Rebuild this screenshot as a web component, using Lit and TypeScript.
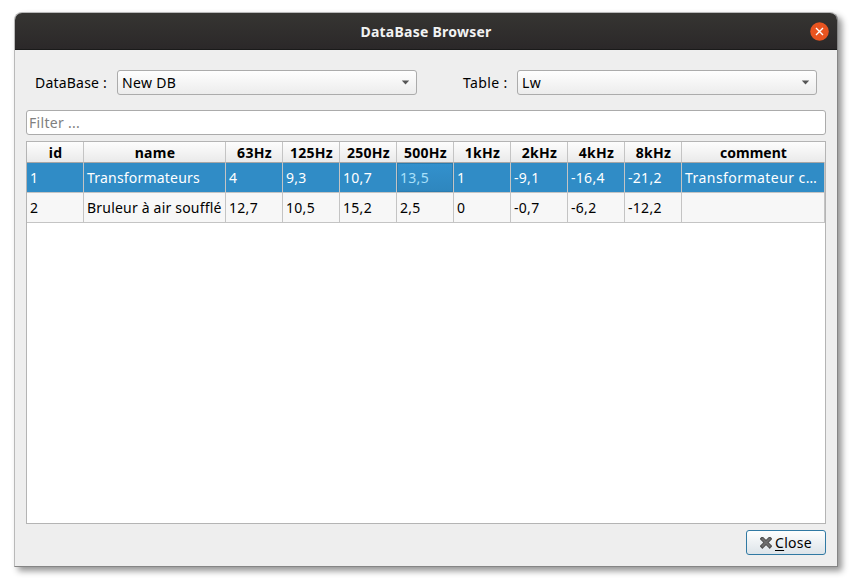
import { LitElement, html, css } from "lit";
import { customElement, property } from "lit/decorators.js";
import { classMap } from "lit/directives/class-map.js";

const COLUMNS = ["id", "name", "63Hz", "125Hz", "250Hz", "500Hz", "1kHz", "2kHz", "4kHz", "8kHz", "comment"];

const ROWS = [
  ["1", "Transformateurs", "4", "9,3", "10,7", "13,5", "1", "-9,1", "-16,4", "-21,2", "Transformateur c…"],
  ["2", "Bruleur à air soufflé", "12,7", "10,5", "15,2", "2,5", "0", "-0,7", "-6,2", "-12,2", ""],
];

const FOCUSED = { row: 0, column: 5 };

@customElement("combo-box")
export class ComboBox extends LitElement {
  @property() value = "";

  static styles = css`
    :host {
      display: flex;
      box-sizing: border-box;
      width: 300px;
      height: 25px;
      border: 1px solid #ababab;
      border-radius: 3px;
      background: linear-gradient(#fefefe, #ececec);
      align-items: center;
      justify-content: space-between;
      padding: 0 6px 0 4px;
    }
    span {
      letter-spacing: 0.35px;
    }
  `;

  render() {
    return html`<span>${this.value}</span>
      <svg width="9" height="5" viewBox="0 0 9 5"><path d="M0.8 0.5H8.2L4.5 4.6Z" fill="#555" /></svg>`;
  }
}

@customElement("data-table")
export class DataTable extends LitElement {
  static styles = css`
    :host {
      display: block;
      box-sizing: border-box;
      border: 1px solid #b4b4b4;
      background: #fff;
    }
    .line {
      display: grid;
      grid-template-columns: 57px 142px repeat(8, 57px) 1fr;
      grid-template-rows: 100%;
      height: 30px;
      line-height: 29px;
      background: #f7f7f7;
    }
    .line > div {
      box-sizing: border-box;
      border-right: 1px solid #c4c4c4;
      border-bottom: 1px solid #c4c4c4;
      padding-left: 3px;
      white-space: nowrap;
      letter-spacing: 0.3px;
    }
    .line > .name {
      letter-spacing: 0.2px;
    }
    .line > .comment {
      letter-spacing: 0.45px;
    }
    .line.head {
      height: 21px;
      line-height: 22px;
      background: linear-gradient(#fdfdfd, #e9e9e9);
      font-weight: 700;
    }
    .line.head > div {
      padding: 0 0 0 1px;
      text-align: center;
      border-bottom-color: #a6a6a6;
      letter-spacing: 0.3px;
    }
    .line.head > div:last-child {
      border-right-color: transparent;
      letter-spacing: 0;
    }
    .line.selected {
      background: #308cc6;
      color: #fff;
    }
    .line > .focused {
      background: linear-gradient(#3391cd, #2e86be);
      box-shadow: inset 0 0 0 1px #2a7db1;
      color: #a9e0fa;
    }
  `;

  render() {
    return html`
      <div class="line head">${COLUMNS.map((c) => html`<div>${c}</div>`)}</div>
      ${ROWS.map(
        (row, r) => html`<div class=${classMap({ line: true, selected: r === 0 })}>
          ${row.map(
            (v, c) => html`<div class=${classMap({ focused: r === FOCUSED.row && c === FOCUSED.column, name: c === 1, comment: c === 10 })}>${v}</div>`
          )}
        </div>`
      )}
    `;
  }
}

@customElement("app-root")
export class AppRoot extends LitElement {
  static styles = css`
    :host {
      display: block;
      box-sizing: border-box;
      height: 585px;
      padding: 12px 18px 18px 14px;
      background: #fff;
      color: #000;
      font: 14px/20px "Noto Sans", sans-serif;
    }
    .window {
      box-sizing: border-box;
      width: 824px;
      height: 555px;
      display: flex;
      flex-direction: column;
      border: 1px solid #b9b9b9;
      border-right-color: #858585;
      border-bottom-color: #858585;
      border-radius: 8px 8px 0 0;
      background: #eeeeee;
      box-shadow: 4px 4px 6px rgba(0, 0, 0, 0.42);
    }
    header {
      box-sizing: border-box;
      height: 37px;
      display: grid;
      grid-template-columns: 1fr auto 1fr;
      align-items: center;
      background: linear-gradient(#363532, #2b2829);
      border-bottom: 1px solid #1a1a1a;
      border-radius: 7px 7px 0 0;
      color: #f2f2f2;
    }
    .title {
      grid-column: 2;
      padding-top: 2px;
      font-weight: 700;
      letter-spacing: 0.25px;
    }
    .dismiss {
      justify-self: end;
      margin-right: 8px;
      display: block;
    }
    .content {
      flex: 1;
      display: flex;
      flex-direction: column;
      padding: 20px 11px 11px;
    }
    .selectors {
      display: flex;
      align-items: center;
      padding-left: 9px;
    }
    .selectors .label {
      width: 82px;
      letter-spacing: 0.2px;
    }
    .selectors .second {
      width: 54px;
      margin-left: 46px;
      letter-spacing: 0.35px;
    }
    .filter {
      box-sizing: border-box;
      height: 25px;
      margin: 15px 0 6px;
      border: 1px solid #ababab;
      border-radius: 3px;
      background: #fff;
      padding-left: 2px;
      line-height: 24px;
      letter-spacing: 0.3px;
      color: #808080;
    }
    data-table {
      height: 383px;
    }
    .close {
      box-sizing: border-box;
      align-self: flex-end;
      width: 80px;
      height: 25px;
      margin-top: 6px;
      border: 1px solid #3079a3;
      border-radius: 3px;
      background: linear-gradient(#fdfefe, #dde4e9);
      display: flex;
      align-items: center;
      justify-content: center;
      gap: 3px;
      letter-spacing: 0.3px;
    }
    .key {
      text-decoration: underline;
      text-underline-offset: 2px;
    }
  `;

  render() {
    return html`
      <div class="window">
        <header>
          <span class="title">DataBase Browser</span>
          <svg class="dismiss" width="19" height="19" viewBox="0 0 19 19">
            <circle cx="9.5" cy="9.5" r="9.3" fill="#e95420" />
            <path d="M6 6L13 13M13 6L6 13" stroke="#fff" stroke-width="1.4" />
          </svg>
        </header>
        <div class="content">
          <div class="selectors">
            <span class="label">DataBase :</span>
            <combo-box value="New DB"></combo-box>
            <span class="label second">Table :</span>
            <combo-box value="Lw"></combo-box>
          </div>
          <div class="filter">Filter ...</div>
          <data-table></data-table>
          <div class="close">
            <svg width="12" height="12" viewBox="0 0 12 12">
              <path d="M2.3 1.8L9.7 9.2M9.7 1.8L2.3 9.2" stroke="#505050" stroke-width="3.8" stroke-linecap="square" stroke-linejoin="round" />
              <path d="M2.5 2L9.5 9M9.5 2L2.5 9" stroke="#6e6e6e" stroke-width="2" stroke-linecap="round" />
            </svg>
            <span><span class="key">C</span>lose</span>
          </div>
        </div>
      </div>
    `;
  }
}
